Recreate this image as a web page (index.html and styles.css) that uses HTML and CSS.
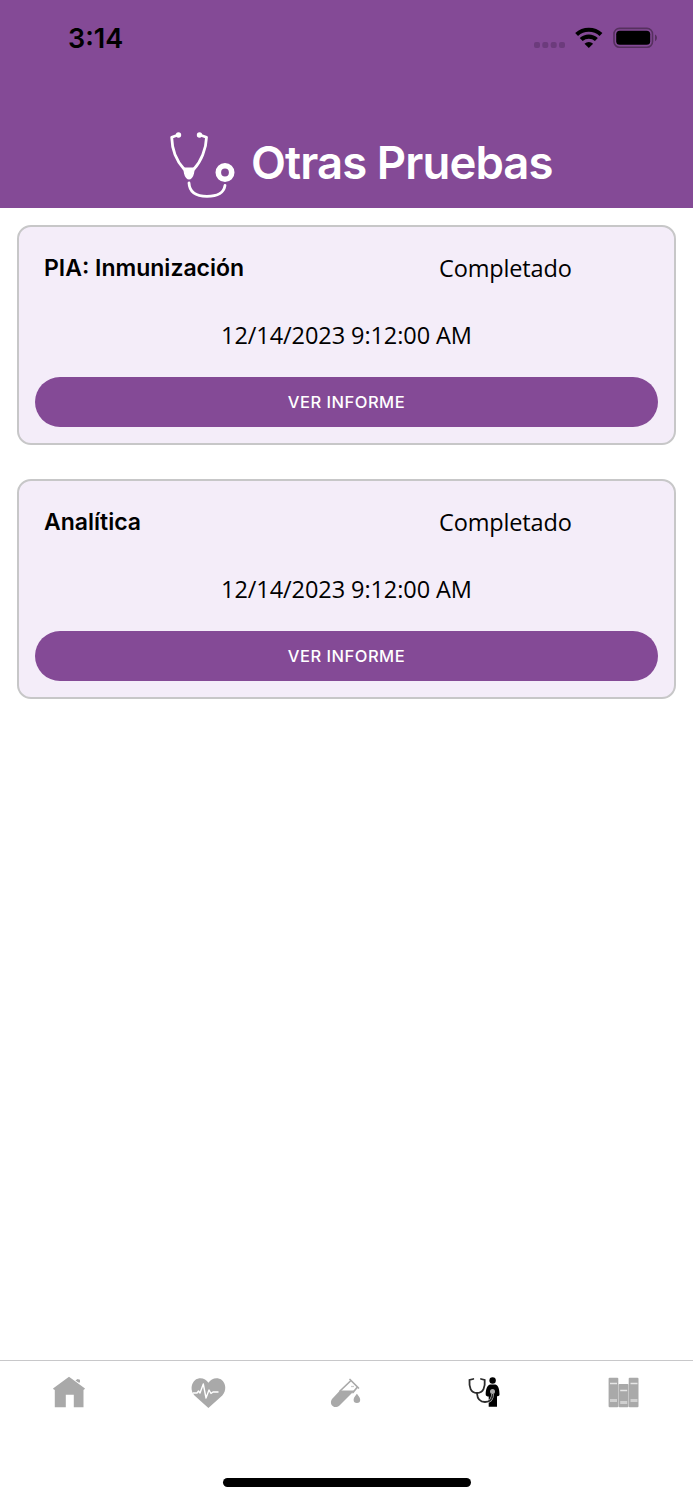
FILE: index.html
```html
<!DOCTYPE html>
<html lang="es">
<head>
<meta charset="utf-8">
<title>Otras Pruebas</title>
<link rel="stylesheet" href="styles.css">
</head>
<body>
<div class="screen">
  <header class="header">
    <div class="status">
      <span class="time">3:14</span>
      <svg class="indicators" width="126" height="24" viewBox="0 0 126 24">
        <g fill="#6c3b7c"><rect x="1" y="16" width="6" height="6" rx="2"/><rect x="9.3" y="16" width="6" height="6" rx="2"/><rect x="17.7" y="16" width="6" height="6" rx="2"/><rect x="26" y="16" width="6" height="6" rx="2"/></g>
        <g fill="none" stroke="#000" stroke-width="4.2"><path d="M43.600 8.500a18 18 0 0 1 24.400 0"/><path d="M48.200 13.600a11 11 0 0 1 15.200 0"/></g>
        <path d="M51.500 17.800a6.200 6.200 0 0 1 8.600 0L55.800 22z"/>
        <rect x="81" y="2.400" width="38.500" height="18.800" rx="5.500" fill="none" stroke="#56305f" stroke-width="1.600"/>
        <rect x="83.200" y="4.800" width="34" height="14" rx="3.500"/>
        <path d="M122 8.600c2.600 1 2.600 5.600 0 6.600z" fill="#56305f"/>
      </svg>
    </div>
    <div class="heading">
      <svg width="69" height="70" viewBox="0 0 69 70" fill="none" stroke="#fff" stroke-width="2.800" stroke-linecap="round" stroke-linejoin="round">
        <path d="M11 6L4.700 8.300C5 20 9.500 32 17 40M33 6l6.500 2.300C39.200 20 34 32.500 27 40"/>
        <circle cx="11.500" cy="6" r="2.700" fill="#fff" stroke="none"/><circle cx="32.500" cy="6" r="2.700" fill="#fff" stroke="none"/>
        <path d="M16 38.500h12l-1 6c-1 4-3 6-5 6s-4-2-5-6z" fill="#fff" stroke="none"/>
        <path d="M22 54C22.500 64 30 67.300 40 67.300S56.500 65 58 56.500"/>
        <circle cx="58" cy="43.500" r="6.700" stroke-width="5.600"/>
      </svg>
      <h1 class="title">Otras Pruebas</h1>
    </div>
  </header>
  <main class="list">
    <article class="card">
      <div class="row"><h2 class="name">PIA: Inmunización</h2><span class="state">Completado</span></div>
      <p class="date">12/14/2023 9:12:00 AM</p>
      <button class="report">VER INFORME</button>
    </article>
    <article class="card">
      <div class="row"><h2 class="name">Analítica</h2><span class="state">Completado</span></div>
      <p class="date">12/14/2023 9:12:00 AM</p>
      <button class="report">VER INFORME</button>
    </article>
  </main>
  <nav class="tabs">
    <div class="tab"><svg width="40" height="40" viewBox="0 0 40 40" fill="#a9a9a9"><path d="M20 4.700L36 16.500l-1 1.300h-.500v17.500h-9.700V22.700h-8v12.600H5.800V17.800H5l-1-1.300z"/><path d="M26.500 8.500l2-1.500 2.500.7v2.800l-1.500 0z"/></svg></div>
    <div class="tab"><svg width="40" height="40" viewBox="0 0 40 40"><path d="M20.400 36L6.500 23.500C2 18.500 3 11 7.500 7.700c4.500-3.200 10.500-1.200 12.900 3.100C23 6.500 29 4.500 33.500 7.700c4.500 3.300 5.300 10.800.8 15.800z" fill="#a9a9a9"/><path d="M5 21h4l1.500-2 1.500 2 3.300-9 2.700 14 3-8 2 3.500 2-1.500h5.500" fill="none" stroke="#fff" stroke-width="1.400" stroke-linejoin="round"/></svg></div>
    <div class="tab"><svg width="40" height="40" viewBox="0 0 40 40" fill="#a9a9a9"><path d="M14 18.500H28.500L13.500 33.500c-5.500 4.500-11-1.500-7.500-6.500z"/><path d="M24 7.500l8.500 8.500M24.500 9L14 19M31 15.500l-4 5" fill="none" stroke="#a9a9a9" stroke-width="1.700" stroke-linecap="round"/><path d="M25 14.500h3" stroke="#ccc" stroke-width="1.300"/><path d="M30.900 21.700c1 1.800 3.300 3.400 3.300 6a3.200 3.200 0 0 1-6.600 0c0-2.600 2.300-4.200 3.300-6z"/></svg></div>
    <div class="tab"><svg width="40" height="40" viewBox="0 0 40 40"><circle cx="27.600" cy="8.500" r="3.200"/><path d="M25 12.500h5.500c3 1 4 5 4 10 0 1.500-1.700 2-2.500 1.500V34.700h-8.300V24.500c-1.500 0-3-.500-3-2 0-5 1.300-9 4.300-10z"/><path d="M12 21.500C12.500 28 15.500 30 20 30s7.500-2 7.500-8" fill="none" stroke="#fff" stroke-width="2.600"/><g fill="none" stroke="#2c2c2c" stroke-width="1.800" stroke-linecap="round"><path d="M8.300 7L4.500 8C4 15 5.500 21 12 21s8.300-6 7.700-13l-3.700-1"/><path d="M12 21.500C12.500 28 15.500 30 20 30s7.500-2 7.500-8"/></g><circle cx="27.500" cy="19.500" r="2.500" fill="#aaa"/></svg></div>
    <div class="tab"><svg width="40" height="40" viewBox="0 0 40 40" fill="#a9a9a9"><rect x="4.600" y="5.700" width="9.700" height="29.600" rx="1"/><rect x="14.500" y="12" width="10" height="23.300" rx="1"/><rect x="24.700" y="5.700" width="9.800" height="29.600" rx="1"/><path d="M6 11.500h7M26.500 11.500h7M16.200 18.400h7" stroke="#e6e6e6" stroke-width="1.500"/><path d="M6 28.500h7M26.500 28.500h7M16.200 30.500h7" stroke="#d0d0d0" stroke-width="3"/></svg></div>
  </nav>
  <div class="home-bar"></div>
</div>
</body>
</html>
```
FILE: styles.css
```css
* { box-sizing: border-box; }
body { margin: 0; background: #fff; color: #000; font-family: Inter, sans-serif; }
h1, h2, p { margin: 0; }
svg { display: block; flex: none; }
.screen { display: flex; flex-direction: column; width: 693px; height: 1500px; }
.header { height: 208px; background: #844a96; }
.status { display: flex; justify-content: space-between; padding: 22px 34px 0 68px; height: 129px; }
.indicators { margin-top: 4px; }
.time { font-size: 27px; font-weight: 600; line-height: 33px; }
.heading { display: flex; padding-left: 167px; gap: 15px; }
.title { color: #fff; font-size: 45.5px; font-weight: 600; line-height: 68px; letter-spacing: -0.9px; white-space: nowrap; }
.list { display: flex; flex-direction: column; gap: 34px; flex: 1; padding: 17px 17px 0; }
.card { height: 220px; padding: 23px 16px 16px; border: 2px solid #c7c7c8; border-radius: 14px; background: #f4edf9; }
.row { display: flex; height: 67px; }
.name { flex: none; width: 404px; padding-left: 9px; font-size: 23px; font-weight: 600; line-height: 36px; white-space: nowrap; }
.state { font: 23.5px/36px "Open Sans", sans-serif; letter-spacing: -0.15px; }
.date { height: 60px; font: 23.5px/36px "Open Sans", sans-serif; letter-spacing: -0.08px; text-align: center; }
.report { display: block; width: 100%; height: 50px; padding: 0; border: 0; border-radius: 25px; background: #844a96; color: #fff; font: 500 16.5px/50px Inter, sans-serif; letter-spacing: 0.5px; }
.tabs { display: grid; grid-template-columns: repeat(5, 1fr); height: 122px; padding-top: 11px; border-top: 1px solid #c8c8ca; }
.tab { display: flex; justify-content: center; }
.home-bar { width: 248px; height: 9px; margin: -4px auto 13px; border-radius: 5px; background: #000; }
```
